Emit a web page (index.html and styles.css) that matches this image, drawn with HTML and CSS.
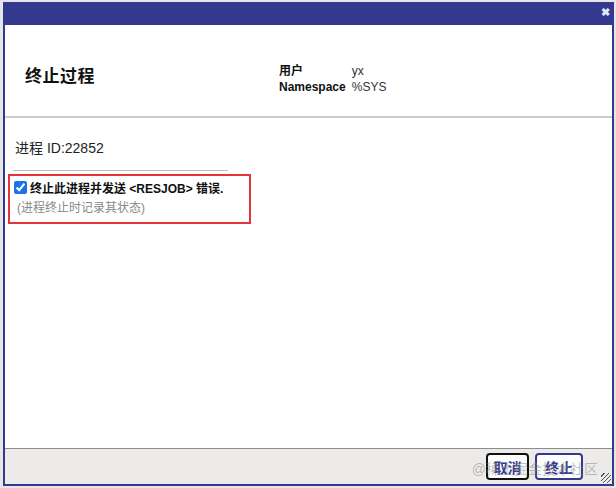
FILE: index.html
```html
<!DOCTYPE html>
<html lang="zh">
<head>
  <meta charset="UTF-8" />
  <title>终止过程</title>
  <link rel="stylesheet" href="styles.css">
</head>
<body>
  <div class="dialog">
    <div class="titlebar">
      <span class="close">&#x2716;</span>
    </div>

    <div class="header">
      <div class="title">终止过程</div>
      <table class="info">
        <tr><th>用户</th><td>yx</td></tr>
        <tr><th>Namespace</th><td>%SYS</td></tr>
      </table>
    </div>

    <div class="body">
      <div class="pid">进程 ID:22852</div>
      <div class="option">
        <label class="check">
          <input type="checkbox" checked>
          <span>终止此进程并发送 &lt;RESJOB&gt; 错误.</span>
        </label>
        <div class="hint">(进程终止时记录其状态)</div>
      </div>
    </div>

    <div class="footer">
      <button class="btn cancel">取消</button>
      <button class="btn primary">终止</button>
      <span class="watermark">@稀土掘金技术社区</span>
      <span class="grip"></span>
    </div>
  </div>
</body>
</html>
```

FILE: styles.css
```css
html, body {
  margin: 0;
  height: 100%;
}

body {
  background: #e6e6e6;
  font-family: "Liberation Sans", Arial, "Noto Sans CJK SC", sans-serif;
  padding: 2px 2px 2px 3px;
  box-sizing: border-box;
}

.dialog {
  height: 100%;
  box-sizing: border-box;
  border: 2px solid #333a8e;
  border-top: none;
  background: #fff;
  display: flex;
  flex-direction: column;
}

.titlebar {
  height: 23px;
  background: #333a8e;
  display: flex;
  justify-content: flex-end;
  align-items: flex-start;
}

.close {
  color: #e8e8f4;
  font-size: 11px;
  font-weight: bold;
  margin: 4px 2px 0 0;
}

.header {
  height: 91px;
  border-bottom: 2px solid #cccccc;
  display: flex;
  align-items: center;
  padding-left: 20px;
}

.title {
  font-size: 17px;
  font-weight: bold;
  color: #111;
  width: 254px;
  margin-top: 8px;
  letter-spacing: 0.5px;
}

.info {
  border-collapse: collapse;
  font-size: 12px;
  margin-top: 17px;
}

.info th {
  text-align: left;
  font-weight: bold;
  color: #111;
  padding: 0 6px 0 0;
  line-height: 16px;
}

.info td {
  color: #333;
  padding: 0;
  line-height: 16px;
}

.body {
  flex: 1;
  padding: 17px 0 0 3px;
}

.pid {
  font-size: 14px;
  color: #222;
  width: 213px;
  margin-left: 5px;
  padding: 2px 0 13px 2px;
  border-bottom: 1px solid #bdbdbd;
}

.option {
  width: 236px;
  height: 46px;
  border: 2px solid #e2343a;
  margin-top: 3px;
  padding-left: 3px;
  box-sizing: content-box;
}

.check {
  display: flex;
  align-items: center;
  gap: 3px;
  font-size: 12px;
  font-weight: bold;
  color: #111;
  margin-top: 3px;
}

.check input {
  width: 13px;
  height: 13px;
  margin: 0 0 0 1px;
  accent-color: #1a73e8;
}

.hint {
  font-size: 12px;
  color: #888;
  margin: 2px 0 0 4px;
}

.footer {
  position: relative;
  height: 35px;
  background: #ecebea;
  border-top: 1px solid #8c8c8c;
  display: flex;
  justify-content: flex-end;
  align-items: center;
  gap: 6px;
  padding-right: 29px;
}

.btn {
  box-sizing: border-box;
  height: 27px;
  padding: 0;
  white-space: nowrap;
  font-family: "Liberation Sans", Arial, "Noto Sans CJK SC", sans-serif;
  font-size: 14px;
  font-weight: bold;
  border-radius: 4px;
  background: #fdfdfd;
  cursor: pointer;
}

.cancel {
  width: 43px;
  border: 2px solid #111;
  color: #333a8e;
}

.primary {
  width: 48px;
  border: 2px solid #333a8e;
  color: #333a8e;
}

.watermark {
  position: absolute;
  right: 14px;
  top: 9px;
  font-size: 14px;
  color: rgba(140, 140, 140, 0.55);
  pointer-events: none;
}

.grip {
  position: absolute;
  right: 1px;
  bottom: 1px;
  width: 10px;
  height: 10px;
  background: repeating-linear-gradient(135deg, transparent 0 2px, #555 2px 3px);
}
```
